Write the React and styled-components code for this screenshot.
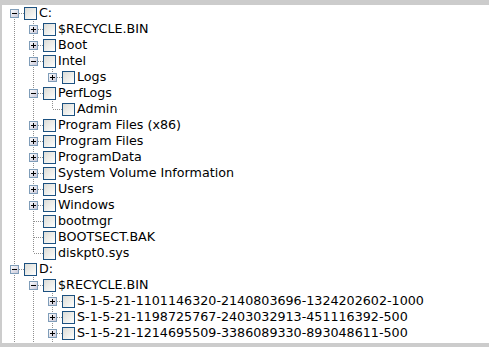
import React from 'react'
import styled, { createGlobalStyle } from 'styled-components'

const GlobalStyle = createGlobalStyle`
html, body {
    margin: 0;
    padding: 0;
    background: #ffffff;
}
`

const DOT = '#8f8f8f'
const vDots = `repeating-linear-gradient(to bottom, ${DOT} 0 1px, transparent 1px 2px)`
const hDots = `repeating-linear-gradient(to right, ${DOT} 0 1px, transparent 1px 2px)`

const Frame = styled.div`
box-sizing: border-box;
width: 489px;
height: 347px;
overflow: hidden;
background: #ffffff;
border-top: 5px solid #cccccc;
border-left: 2px solid #cccccc;
border-bottom: 4px solid #cccccc;
padding-left: 3px;
font-family: "DejaVu Sans", Verdana, sans-serif;
font-size: 12.7px;
color: #000000;
`

const Row = styled.div`
display: flex;
align-items: flex-start;
height: 16px;
`

// a column of the indentation: carries the parent's line down when it has more siblings
const Guide = styled.div`
flex: 0 0 19px;
height: 16px;
background-image: ${props => props.on ? vDots : 'none'};
background-size: 1px 16px;
background-position: 9px 0;
background-repeat: no-repeat;
`

const Connector = styled.div`
flex: 0 0 19px;
height: 16px;
box-sizing: border-box;
padding: 4px 0 0 5px;
background-image: ${props => [
    props.up ? vDots : null,
    props.down ? vDots : null,
    hDots,
].filter(Boolean).join(', ')};
background-size: ${props => [
    props.up ? '1px 8px' : null,
    props.down ? '1px 8px' : null,
    '9px 1px',
].filter(Boolean).join(', ')};
background-position: ${props => [
    props.up ? '9px 0' : null,
    props.down ? '9px 8px' : null,
    '10px 8px',
].filter(Boolean).join(', ')};
background-repeat: no-repeat;
`

const Box = styled.div`
box-sizing: border-box;
width: 13px;
height: 13px;
margin-top: 2px;
flex: 0 0 13px;
border: 1px solid #1c5180;
background: linear-gradient(135deg, #dcdcd7 0%, #f4f4f1 70%, #ffffff 100%);
`

const Label = styled.span`
margin-left: 2px;
line-height: 16px;
white-space: nowrap;
`

const Expander = ({ open }) => (
    <svg width="9" height="9" viewBox="0 0 9 9" style={{ display: 'block' }}>
        <defs>
            <linearGradient id="exp" x1="0" y1="0" x2="1" y2="1">
                <stop offset="0" stopColor="#ffffff" />
                <stop offset="1" stopColor="#c6c5d7" />
            </linearGradient>
        </defs>
        <rect x="0.5" y="0.5" width="8" height="8" fill="url(#exp)" stroke="#7f9db9" />
        <rect x="2" y="4" width="5" height="1" fill="#000000" />
        {!open && <rect x="4" y="2" width="1" height="5" fill="#000000" />}
    </svg>
)

const tree = [
    { name: 'C:', open: true, kids: [
        { name: '$RECYCLE.BIN', kids: [] },
        { name: 'Boot', kids: [] },
        { name: 'Intel', open: true, kids: [
            { name: 'Logs', kids: [] },
        ] },
        { name: 'PerfLogs', open: true, kids: [
            { name: 'Admin' },
        ] },
        { name: 'Program Files (x86)', kids: [] },
        { name: 'Program Files', kids: [] },
        { name: 'ProgramData', kids: [] },
        { name: 'System Volume Information', kids: [] },
        { name: 'Users', kids: [] },
        { name: 'Windows', kids: [] },
        { name: 'bootmgr' },
        { name: 'BOOTSECT.BAK' },
        { name: 'diskpt0.sys' },
    ] },
    { name: 'D:', open: true, kids: [
        { name: '$RECYCLE.BIN', open: true, kids: [
            { name: 'S-1-5-21-1101146320-2140803696-1324202602-1000', kids: [] },
            { name: 'S-1-5-21-1198725767-2403032913-451116392-500', kids: [] },
            { name: 'S-1-5-21-1214695509-3386089330-893048611-500', kids: [] },
            { name: 'S-1-5-21-1214695509-3386089330-893048611-1001', kids: [] },
            { name: 'S-1-5-21-1214695509-3386089330-893048611-1002', kids: [] },
        ] },
        { name: 'Data', kids: [] },
    ] },
    { name: 'E:', kids: [] },
]

const flatten = (nodes, guides = [], out = []) => {
    nodes.forEach((node, i) => {
        const last = i === nodes.length - 1
        const first = guides.length === 0 && i === 0
        out.push({ node, guides, up: !first, down: !last })
        if (node.open && node.kids) flatten(node.kids, [...guides, !last], out)
    })
    return out
}

const App = () => {
    const rows = flatten(tree)
    return (
        <>
            <GlobalStyle />
            <Frame>
                {rows.map(({ node, guides, up, down }, idx) => (
                    <Row key={idx}>
                        {guides.map((on, g) => <Guide key={g} on={on} />)}
                        <Connector up={up} down={down}>
                            {node.kids && <Expander open={node.open} />}
                        </Connector>
                        <Box />
                        <Label>{node.name}</Label>
                    </Row>
                ))}
            </Frame>
        </>
    )
}

export default App
